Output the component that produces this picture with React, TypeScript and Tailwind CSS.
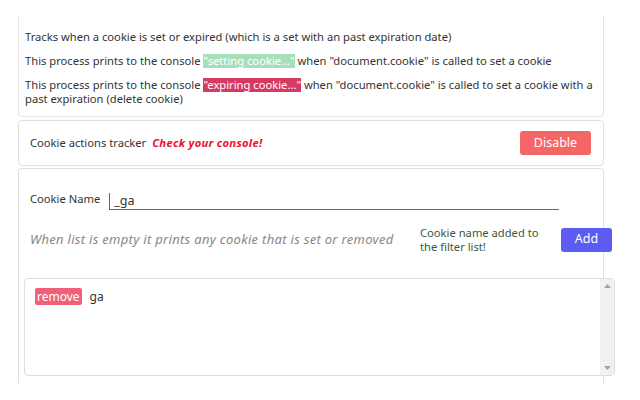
import React from 'react';

export default function App() {
  return (
    <div className="w-[640px] h-[400px] bg-white overflow-hidden font-['Noto_Sans',sans-serif] text-[11.2px] text-[#333]">
      <div className="ml-[18px] w-[586px] pt-[15px]">
        {/* Info card */}
        <div className="border border-t-0 border-[#e5e5e5] rounded-b-[4px] px-[6px] pt-[15px] pb-[10px] space-y-[10px] leading-[14px]">
          <p>Tracks when a cookie is set or expired (which is a set with an past expiration date)</p>
          <p>
            This process prints to the console{' '}
            <span className="inline-block leading-[14px] bg-[#a7dfbb] text-white">"setting cookie..."</span>{' '}
            when "document.cookie" is called to set a cookie
          </p>
          <p>
            This process prints to the console{' '}
            <span className="inline-block leading-[14px] bg-[#d43a64] text-white">"expiring cookie..."</span>{' '}
            when "document.cookie" is called to set a cookie with a past expiration (delete cookie)
          </p>
        </div>

        {/* Tracker toggle */}
        <div className="mt-[3px] border border-[#e0e0e0] rounded-[4px] h-[46px] pl-[11px] pr-[12px] flex items-center justify-between">
          <p>
            Cookie actions tracker
            <span className="ml-[6px] text-[#e8112d] font-bold italic tracking-[0.3px]">Check your console!</span>
          </p>
          <button className="w-[71px] h-[24px] rounded-[3px] bg-[#f56767] text-white text-[12.5px]">Disable</button>
        </div>

        {/* Filter card */}
        <div className="mt-[2px] border border-[#e0e0e0] border-b-0 rounded-t-[4px] pl-[11px] pt-[22px] h-[215px]">
          <div className="flex items-end gap-[9px] w-[529px]">
            <label className="pb-[2px]">Cookie Name</label>
            <div className="flex-1 border-b border-[#666] border-l pl-[4px] text-[12.5px] leading-[16px]">_ga</div>
          </div>
          <div className="mt-[16px] flex items-center">
            <p className="shrink-0 italic text-[#888] text-[13px] tracking-[0.3px] w-[390px]">When list is empty it prints any cookie that is set or removed</p>
            <p className="shrink-0 w-[141px] pr-[14px] text-[#3a5a3a] leading-[14px]">Cookie name added to the filter list!</p>
            <button className="w-[51px] h-[24px] shrink-0 rounded-[3px] bg-[#5c5cf2] text-white text-[12.5px]">Add</button>
          </div>
          <div className="mt-[24px] ml-[-6px] w-[591px] h-[98px] border border-[#ddd] rounded-[4px] flex">
            <div className="flex-1 pl-[10px] pt-[9px] flex items-start gap-[8px]">
              <span className="bg-[#f0607a] text-white rounded-[2px] px-[2px] text-[12px] leading-[17px]">remove</span>
              <span className="text-[12px] leading-[17px]">ga</span>
            </div>
            <div className="w-[14px] bg-[#f1f1f1] flex flex-col justify-between items-center py-[5px]">
              <svg width="7" height="4" viewBox="0 0 7 4"><path d="M0 4L3.5 0L7 4Z" fill="#a3a3a3" /></svg>
              <svg width="7" height="4" viewBox="0 0 7 4"><path d="M0 0L3.5 4L7 0Z" fill="#a3a3a3" /></svg>
            </div>
          </div>
        </div>
      </div>
    </div>
  );
}
